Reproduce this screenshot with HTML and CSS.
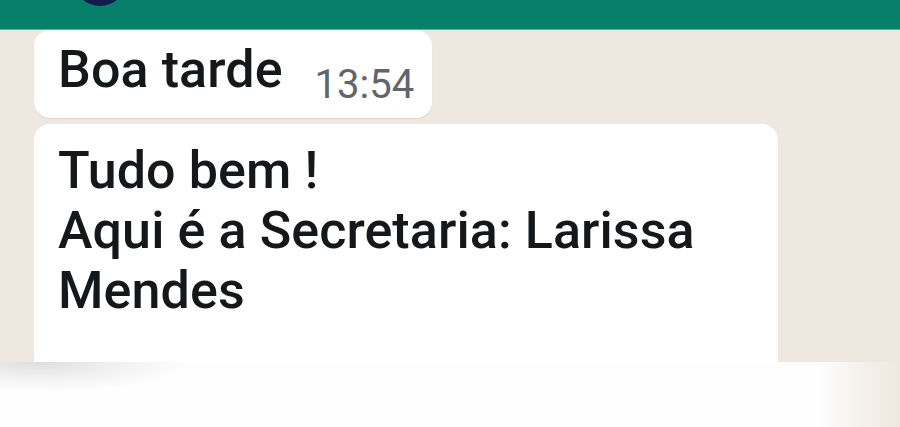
FILE: index.html
```html
<!DOCTYPE html>
<html lang="pt">
<head>
<meta charset="utf-8">
<title>Conversa</title>
<link rel="stylesheet" href="styles.css">
</head>
<body>
<div class="screen">
  <header class="topbar">
    <span class="avatar"></span>
  </header>
  <main class="chat">
    <div class="bubble short">
      <span class="msg">Boa tarde</span>
      <span class="time">13:54</span>
    </div>
    <div class="bubble long">
      <p class="msg">Tudo bem !<br>Aqui é a Secretaria: Larissa Mendes</p>
    </div>
  </main>
  <footer class="bottom"></footer>
</div>
</body>
</html>
```
FILE: styles.css
```css
* { box-sizing: border-box; }
html, body { margin: 0; padding: 0; }
body {
  width: 900px;
  height: 427px;
  overflow: hidden;
  background: #fefefe;
  font-family: Roboto, "Liberation Sans", sans-serif;
}
.screen {
  display: flex;
  flex-direction: column;
  height: 427px;
}
.topbar {
  position: relative;
  height: 30px;
  flex: none;
  background: #07806a;
  border-bottom: 1px solid #62ad9c;
}
.avatar {
  position: absolute;
  left: 74px;
  top: -44px;
  width: 52px;
  height: 50px;
  border-radius: 50%;
  background: #101c4c;
}
.chat {
  flex: none;
  height: 332px;
  display: flex;
  flex-direction: column;
  align-items: flex-start;
  gap: 6px;
  padding-left: 34px;
  background: #efe8e0;
}
.bubble {
  background: #ffffff;
  color: #15181a;
  box-shadow: 0 1px 1px rgba(0, 0, 0, 0.08);
}
.msg {
  font-size: 52px;
  font-weight: 500;
  line-height: 60px;
  letter-spacing: 0.1px;
  margin: 0;
}
.short {
  display: flex;
  align-items: flex-start;
  height: 88px;
  padding: 10px 18px 0 24px;
  border-radius: 16px;
}
.time {
  margin-left: 32px;
  margin-top: 22px;
  font-size: 40px;
  line-height: 46px;
  color: #5f666c;
}
.long {
  flex: 1;
  width: 744px;
  padding: 17px 24px 0 24px;
  border-radius: 16px 16px 0 0;
  box-shadow: none;
}
.long .msg {
  width: 660px;
}
.bottom {
  flex: 1;
  background:
    linear-gradient(to right, rgba(239, 232, 224, 0) 0, rgba(239, 232, 224, 0) 820px, rgba(239, 232, 224, 0.6) 860px, #efe8e0 900px),
    radial-gradient(ellipse 150px 30px at 40px 0, rgba(200, 200, 200, 0.6) 0, rgba(215, 215, 215, 0.35) 50%, rgba(255, 255, 255, 0) 100%),
    #fefefe;
}
```
